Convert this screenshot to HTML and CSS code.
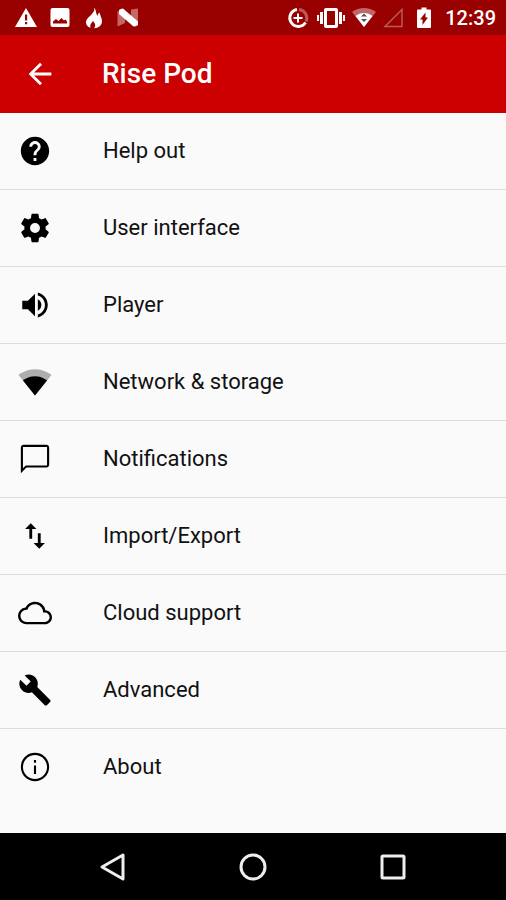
FILE: index.html
```html
<!DOCTYPE html>
<html lang="en">
<head>
<meta charset="utf-8">
<meta name="viewport" content="width=device-width, initial-scale=1">
<title>Rise Pod</title>
<link rel="stylesheet" href="styles.css">
</head>
<body>
<div class="screen">
  <div class="status">
    <div class="status-group status-left">
      <svg width="24" height="24" viewBox="0 0 24 24"><path d="M12 2 23 21H1z"/><path class="cut" d="M11 8.500h2.200v6H11zM11 16h2.200v2.200H11z"/></svg>
      <svg width="24" height="24" viewBox="0 0 24 24"><rect x="2.500" y="2" width="19" height="19" rx="2"/><path class="cut" d="M5 17.500v-2l3-2.500 2.500 2 3-3 2.500 2.500 1.500-1 1.500 2v2z"/></svg>
      <svg width="24" height="24" viewBox="0 0 24 24"><path d="M12 1.500c1 3-.5 4.500-2.500 7C7.500 10.800 4 13 4 16.500c0 2.500 1.800 4.500 4.500 5.200C7.500 19 9 17.500 11 15c.8 1.500 2.500 2.500 2.200 4.500-.1 1-.5 2-1.200 2.800 4.500-.2 8-3 8-7 0-3.300-1.800-5.500-2.500-8.800-1.300.9-1.800 2-1.800 3.500C13.500 7.500 14.500 4 12 1.500z"/></svg>
      <svg width="24" height="24" viewBox="0 0 24 24"><path class="faint" d="M1.500 5 9 8v9l-7.500 3.500zM15 3.500l7-1v16l-7-5z"/><path d="M3 4q1.500-1.500 4-1.500L22 15.500v3.500q-2 1.500-4.500 1.500L3 8z"/></svg>
    </div>
    <div class="status-group status-right">
      <svg width="24" height="24" viewBox="0 0 24 24"><path class="line heavy faint-line" d="M13 3.500a8.500 8.500 0 0 1 7 12"/><path class="line heavy" d="M11 3.500a8.500 8.500 0 1 0 8.500 13"/><path class="line plus" d="M12 7.500v9M7.500 12h9"/></svg>
      <svg width="28" height="24" viewBox="0 0 28 24"><path fill-rule="evenodd" d="M9 2h10a2 2 0 0 1 2 2v16a2 2 0 0 1-2 2H9a2 2 0 0 1-2-2V4a2 2 0 0 1 2-2zm1 3v14h8V5zM3 6h3v12H3zM0 9h2v6H0zM22 6h3v12h-3zM26 9h2v6h-2z"/></svg>
      <svg width="24" height="24" viewBox="0 0 24 24"><path class="faint" d="M0 6C7 .5 17 .5 24 6L12 21z"/><path d="M3.500 10c5-4 12-4 17 0L12 21z"/><path class="mark" d="M12 7.500 15 10.500H9zM9 13h6l-3 3z"/></svg>
      <svg width="22" height="24" viewBox="0 0 22 24"><path class="line faint-line" d="M19 3.500V20.500H2z"/></svg>
      <svg width="24" height="24" viewBox="0 0 24 24"><path d="M9.500 1.500h5v2H18a1 1 0 0 1 1 1V21a1 1 0 0 1-1 1H6a1 1 0 0 1-1-1V4.500a1 1 0 0 1 1-1h3.500z"/><path class="cut" d="M13.500 6.500v5H16L10.500 19v-5.500H8z"/></svg>
      <time class="clock">12:39</time>
    </div>
  </div>

  <header class="appbar">
    <button class="back" type="button" aria-label="Back"><svg width="34" height="34" viewBox="0 0 24 24"><path d="M20 11H7.830l5.590-5.590L12 4l-8 8 8 8 1.410-1.410L7.830 13H20z"/></svg></button>
    <h1 class="title">Rise Pod</h1>
  </header>

  <main class="list">
    <a class="row" href="#help"><svg class="icon" viewBox="0 0 24 24"><path d="M12 2C6.480 2 2 6.480 2 12s4.480 10 10 10 10-4.480 10-10S17.520 2 12 2zm1 17h-2v-2h2v2zm2.070-7.750l-.9.920C13.450 12.900 13 13.500 13 15h-2v-.5c0-1.100.45-2.100 1.170-2.830l1.240-1.260c.37-.36.59-.86.59-1.410 0-1.100-.9-2-2-2s-2 .9-2 2H8c0-2.210 1.790-4 4-4s4 1.790 4 4c0 .88-.36 1.680-.93 2.250z"/></svg><span>Help out</span></a>
    <a class="row" href="#interface"><svg class="icon" viewBox="0 0 24 24"><path d="M12 15.500A3.500 3.500 0 0 1 8.500 12 3.500 3.500 0 0 1 12 8.500a3.500 3.500 0 0 1 3.500 3.500 3.500 3.500 0 0 1-3.500 3.500m7.430-2.530c.04-.32.07-.64.07-.97s-.03-.66-.07-1l2.110-1.630c.19-.15.24-.42.12-.64l-2-3.460c-.12-.22-.39-.31-.61-.22l-2.490 1c-.52-.39-1.060-.73-1.690-.98l-.37-2.650A.506.506 0 0 0 14 2h-4c-.25 0-.46.18-.5.42l-.37 2.650c-.63.25-1.170.59-1.690.98l-2.490-1c-.22-.09-.49 0-.61.22l-2 3.460c-.13.22-.07.49.12.64L4.570 11c-.04.34-.07.67-.07 1s.03.65.07.97l-2.110 1.660c-.19.15-.25.42-.12.64l2 3.460c.12.22.39.3.61.22l2.490-1.010c.52.4 1.060.74 1.690.99l.37 2.650c.04.24.25.42.5.42h4c.25 0 .46-.18.5-.42l.37-2.650c.63-.26 1.170-.59 1.690-.99l2.490 1.010c.22.08.49 0 .61-.22l2-3.460c.12-.22.07-.49-.12-.64z"/></svg><span>User interface</span></a>
    <a class="row" href="#player"><svg class="icon" viewBox="0 0 24 24"><path d="M3 9v6h4l5 5V4L7 9H3zm13.500 3c0-1.770-1.020-3.290-2.500-4.030v8.050c1.480-.73 2.500-2.250 2.500-4.020zM14 3.230v2.060c2.890.86 5 3.540 5 6.710s-2.110 5.850-5 6.710v2.060c4.010-.91 7-4.490 7-8.770s-2.990-7.860-7-8.770z"/></svg><span>Player</span></a>
    <a class="row" href="#network"><svg class="icon" viewBox="0 0 24 24"><path class="weak" d="M12.010 21.490L23.640 7c-.45-.34-4.930-4-11.640-4C5.280 3 .81 6.660.36 7l11.630 14.490.01.01.01-.01z"/><path d="M3.530 10.950l8.460 10.540.01.010.01-.01 8.460-10.540C20.040 10.620 16.810 8 12 8c-4.810 0-8.040 2.620-8.470 2.950z"/></svg><span>Network &amp; storage</span></a>
    <a class="row" href="#notifications"><svg class="icon" viewBox="0 0 24 24"><path d="M20 2H4c-1.100 0-2 .9-2 2v18l4-4h14c1.100 0 2-.9 2-2V4c0-1.100-.9-2-2-2zm.500 14.500H5.500L3.500 18.500V3.500h17z"/></svg><span>Notifications</span></a>
    <a class="row" href="#import"><svg class="icon" viewBox="0 0 24 24"><path d="M9 3L5 6.990h3V14h2V6.990h3L9 3zm7 14.010V10h-2v7.010h-3L15 21l4-3.990h-3z"/></svg><span>Import/Export</span></a>
    <a class="row" href="#cloud"><svg class="icon" viewBox="0 0 24 24"><path d="M19.350 10.040A7.490 7.490 0 0 0 12 4C9.110 4 6.600 5.640 5.350 8.040A5.994 5.994 0 0 0 0 14c0 3.310 2.690 6 6 6h13c2.760 0 5-2.240 5-5 0-2.640-2.050-4.780-4.650-4.960zM19 18.300H6A4.300 4.300 0 0 1 6 9.700h.6A5.700 5.700 0 0 1 17.700 11.700H19a3.300 3.300 0 0 1 0 6.600z"/></svg><span>Cloud support</span></a>
    <a class="row" href="#advanced"><svg class="icon" viewBox="0 0 24 24"><path d="M22.700 19l-9.100-9.100c.9-2.300.4-5-1.500-6.900-2-2-5-2.400-7.400-1.300L9 6 6 9 1.600 4.700C.4 7.100.9 10.100 2.900 12.100c1.900 1.900 4.600 2.400 6.900 1.500l9.100 9.100c.4.4 1 .4 1.400 0l2.300-2.300c.5-.4.5-1.100.1-1.400z"/></svg><span>Advanced</span></a>
    <a class="row" href="#about"><svg class="icon" viewBox="0 0 24 24"><path d="M11.250 17h1.500v-6h-1.500v6zM12 2C6.480 2 2 6.480 2 12s4.480 10 10 10 10-4.480 10-10S17.520 2 12 2zm0 18.500c-4.690 0-8.500-3.810-8.500-8.500S7.310 3.500 12 3.500s8.500 3.810 8.500 8.500-3.810 8.500-8.500 8.500zM11.250 9h1.500V7h-1.500v2z"/></svg><span>About</span></a>
  </main>

  <nav class="navbar" aria-label="System">
    <button type="button" aria-label="Back"><svg width="32" height="32" viewBox="0 0 32 32"><path d="M26 4v24L5 16z"/></svg></button>
    <button type="button" aria-label="Home"><svg width="32" height="32" viewBox="0 0 32 32"><circle cx="16" cy="16" r="12"/></svg></button>
    <button type="button" aria-label="Recent apps"><svg width="32" height="32" viewBox="0 0 32 32"><rect x="5" y="5" width="22" height="22" rx="1"/></svg></button>
  </nav>
</div>
</body>
</html>
```

FILE: styles.css
```css
* {
  box-sizing: border-box;
}

body {
  margin: 0;
  background: #fafafa;
  color: #111;
  font-family: Roboto, "Liberation Sans", sans-serif;
}

svg {
  display: block;
  flex: none;
}

button {
  padding: 0;
  border: 0;
  background: none;
}

.screen {
  display: flex;
  flex-direction: column;
  min-height: 100vh;
}

.status {
  display: flex;
  justify-content: space-between;
  align-items: center;
  height: 35px;
  padding: 0 10px 0 14px;
  background: #900;
  color: #fff;
  fill: #fff;
}

.status-group {
  display: flex;
  align-items: center;
}

.status-left {
  gap: 10px;
}

.status-right {
  gap: 7px;
}

.clock {
  padding-left: 2px;
  font-size: 20px;
  font-weight: 500;
  line-height: 24px;
}

.cut {
  fill: #900;
}

.mark {
  fill: #455;
}

.faint {
  fill-opacity: 0.4;
}

.line {
  fill: none;
  stroke: #fff;
  stroke-width: 1.5;
}

.heavy {
  stroke-width: 3;
}

.plus {
  stroke-width: 2;
}

.faint-line {
  stroke-opacity: 0.35;
}

.appbar {
  display: flex;
  align-items: center;
  gap: 45px;
  height: 78px;
  padding: 0 23px;
  background: #c00;
  color: #fff;
}

.back {
  fill: #fff;
}

.title {
  margin: 0;
  font-size: 28px;
  font-weight: 500;
  line-height: 32px;
}

.list {
  flex: 1;
}

.row {
  display: flex;
  align-items: center;
  gap: 51px;
  height: 77px;
  padding: 0 18px;
  border-bottom: 1px solid #dcdcdc;
  color: inherit;
  font-size: 22px;
  line-height: 28px;
  text-decoration: none;
}

.row:last-child {
  height: 76px;
  border-bottom: 0;
}

.icon {
  width: 34px;
  height: 34px;
  fill: #000;
}

.weak {
  fill-opacity: 0.3;
}

.navbar {
  display: flex;
  justify-content: center;
  align-items: center;
  gap: 108px;
  height: 67px;
  background: #000;
}

.navbar svg {
  fill: none;
  stroke: #eee;
  stroke-width: 3;
  stroke-linejoin: round;
}
```
